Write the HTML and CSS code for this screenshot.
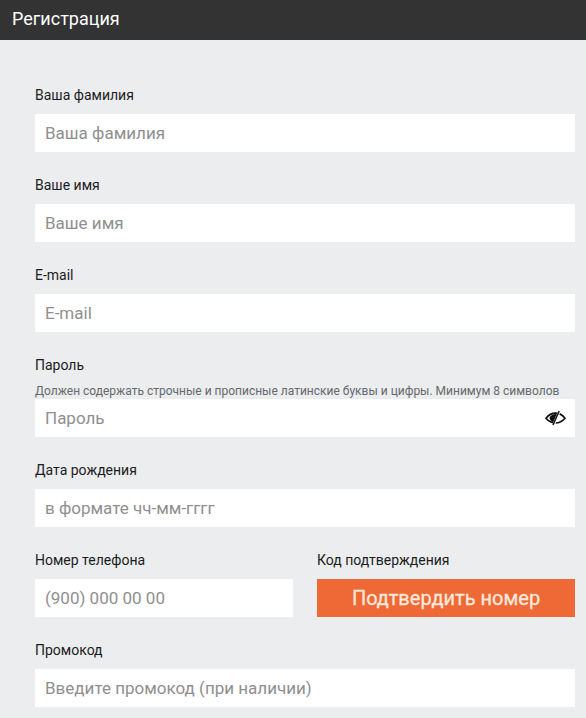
FILE: index.html
```html
<!DOCTYPE html>
<html>
<head>
  <title>Регистрация</title>
  <meta charset="utf-8">
  <link rel="stylesheet" href="styles.css">
</head>
<body>
  <div class="header">Регистрация</div>

  <form class="form">
    <div class="field">
      <label class="label">Ваша фамилия</label>
      <input class="input" type="text" placeholder="Ваша фамилия">
    </div>
    <div class="field">
      <label class="label">Ваше имя</label>
      <input class="input" type="text" placeholder="Ваше имя">
    </div>
    <div class="field">
      <label class="label">E-mail</label>
      <input class="input" type="text" placeholder="E-mail">
    </div>
    <div class="field">
      <label class="label">Пароль</label>
      <div class="hint">Должен содержать строчные и прописные латинские буквы и цифры. Минимум 8 символов</div>
      <div class="password">
        <input class="input" type="text" placeholder="Пароль">
        <svg class="eye" width="21" height="16" viewBox="0 0 21 16">
          <path d="M1 8.2 C3.5 5 6.5 3.2 10.5 3.2 C14.5 3.2 17.5 5 20 8.2 C17.5 11.2 14.5 13 10.5 13 C6.5 13 3.5 11.2 1 8.2 Z" fill="none" stroke="#111" stroke-width="1.7"/>
          <path d="M4.5 8 C5 5.5 8 4 11.5 4 L13 4.5 L9 12.5 C7 12 5 10.5 4.5 8 Z" fill="#111"/>
          <path d="M14.6 0.8 L8.4 15.2" stroke="#fff" stroke-width="2.6"/>
          <path d="M14.2 1 L8 15" stroke="#111" stroke-width="1.5"/>
        </svg>
      </div>
    </div>
    <div class="field">
      <label class="label">Дата рождения</label>
      <input class="input" type="text" placeholder="в формате чч-мм-гггг">
    </div>
    <div class="field-row">
      <div class="field">
        <label class="label">Номер телефона</label>
        <input class="input" type="text" placeholder="(900) 000 00 00">
      </div>
      <div class="field">
        <label class="label">Код подтверждения</label>
        <button class="confirm" type="button">Подтвердить номер</button>
      </div>
    </div>
    <div class="field">
      <label class="label">Промокод</label>
      <input class="input" type="text" placeholder="Введите промокод (при наличии)">
    </div>
  </form>
</body>
</html>
```

FILE: styles.css
```css
* {
  box-sizing: border-box;
}

html, body {
  height: 100%;
}

body {
  margin: 0;
  overflow: hidden;
  background-color: #ebedef;
  color: #1c1c1c;
  font-family: Roboto, "Liberation Sans", sans-serif;
}

.header {
  height: 40px;
  padding-left: 12px;
  background-color: #333333;
  color: #ffffff;
  font-size: 18px;
  line-height: 38px;
}

.form {
  display: flex;
  flex-direction: column;
  gap: 24px;
  padding: 46px 11px 0 35px;
}

.field {
  display: flex;
  flex-direction: column;
}

.label {
  height: 28px;
  font-size: 14px;
  line-height: 18px;
}

.hint {
  height: 15px;
  color: #66696c;
  font-size: 12px;
  line-height: 14px;
  white-space: nowrap;
}

.input {
  width: 100%;
  height: 38px;
  padding: 0 10px;
  border: 0;
  border-radius: 0;
  outline: 0;
  background-color: #ffffff;
  color: #333333;
  font-family: inherit;
  font-size: 17px;
}

.input::placeholder {
  color: #8f8f8f;
  opacity: 1;
}

.password {
  position: relative;
}

.eye {
  position: absolute;
  top: 11px;
  right: 9px;
}

.field-row {
  display: grid;
  grid-template-columns: 258px 258px;
  gap: 24px;
}

.confirm {
  height: 38px;
  padding: 0;
  border: 0;
  background-color: #ee6936;
  color: #fde8dc;
  font-family: inherit;
  font-size: 20px;
  -webkit-text-stroke: 0.3px #fde8dc;
}
```
